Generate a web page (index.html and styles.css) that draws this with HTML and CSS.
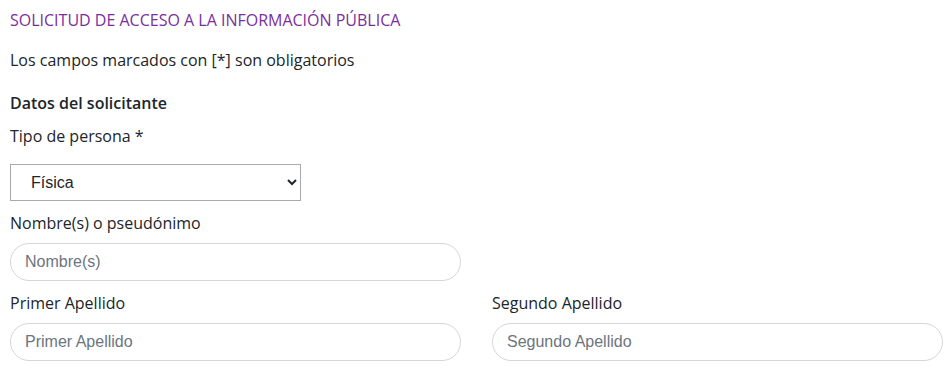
FILE: index.html
```html
<!doctype html>
<html>
<head>
<meta charset="utf-8">
<title>Solicitud de acceso a la información pública</title>
<link rel="stylesheet" href="styles.css">
</head>
<body>
<div class="form_box">
	<h2 class="title">SOLICITUD DE ACCESO A LA INFORMACIÓN PÚBLICA</h2>
	<p class="note">Los campos marcados con [*] son obligatorios</p>
	<h3 class="section">Datos del solicitante</h3>
	<div class="field">
		<label class="lbl">Tipo de persona *</label>
		<select class="sel">
			<option>Física</option>
			<option>Moral</option>
		</select>
	</div>
	<div class="row">
		<div class="field">
			<label class="lbl">Nombre(s) o pseudónimo</label>
			<input type="text" class="txt" placeholder="Nombre(s)" />
		</div>
		<div class="field"></div>
	</div>
	<div class="row">
		<div class="field">
			<label class="lbl">Primer Apellido</label>
			<input type="text" class="txt" placeholder="Primer Apellido" />
		</div>
		<div class="field">
			<label class="lbl">Segundo Apellido</label>
			<input type="text" class="txt" placeholder="Segundo Apellido" />
		</div>
	</div>
</div>
</body>
</html>
```

FILE: styles.css
```css
*{margin:0; padding:0; box-sizing:border-box;}
body{background:#fff; color:#212529; font-family:"Open Sans", "Liberation Sans", sans-serif; font-size:16px;}
.form_box{width:952px; padding:8px 9px 0 10px;}
.title{font-size:16px; font-weight:500; line-height:24px; color:#7a2ea0;}
.note{line-height:24px; margin-top:16px;}
.section{font-size:16px; font-weight:600; line-height:24px; margin-top:19px;}
.lbl{display:block; line-height:24px; margin-bottom:8px;}
.field{margin-bottom:10px;}
.section + .field{margin-top:9px;}
.sel{display:block; width:291px; height:37px; border:1px solid #aaa; border-radius:0; background:#fff; color:#212529; font-family:"Liberation Sans", Arial, sans-serif; font-size:16px; padding:0 10px 0 16px;}
.section + .field .lbl{margin-bottom:16px;}
.row{display:grid; grid-template-columns:1fr 1fr; column-gap:31px;}
.row .field{min-width:0;}
.txt{display:block; width:100%; height:38px; border:1px solid #d3d6dc; border-radius:19px; padding:0 14px; font-family:"Liberation Sans", Arial, sans-serif; font-size:16px; color:#212529; background:#fff; outline:none;}
.txt::placeholder{color:#6c757d;}
```
